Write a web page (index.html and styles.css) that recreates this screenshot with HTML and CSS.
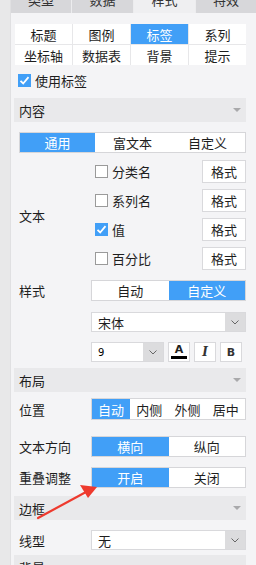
FILE: index.html
```html
<!DOCTYPE html>
<html>
  <head>
    <title>标签设置</title>
    <link rel="stylesheet" href="styles.css">
  </head>
  <body>
    <div class="app">
      <div class="side"></div>
      <div class="panel">
        <div class="tabs">
          <div class="tab">类型</div>
          <div class="tab">数据</div>
          <div class="tab on">样式</div>
          <div class="tab">特效</div>
        </div>
        <div class="body">
          <div class="subtabs">
            <div class="cell">标题</div>
            <div class="cell">图例</div>
            <div class="cell on">标签</div>
            <div class="cell">系列</div>
            <div class="cell">坐标轴</div>
            <div class="cell">数据表</div>
            <div class="cell">背景</div>
            <div class="cell">提示</div>
          </div>
          <div class="use-row">
            <span class="box on"><svg viewBox="0 0 13 13" width="13" height="13"><path d="M2.5 6.8 L5.2 9.5 L10.5 3.2" fill="none" stroke="#fff" stroke-width="1.8"/></svg></span>
            使用标签
          </div>

          <div class="section s-content">内容<span class="tri"></span></div>
          <div class="seg s-tabs">
            <div class="seg-item on">通用</div>
            <div class="seg-item">富文本</div>
            <div class="seg-item">自定义</div>
          </div>

          <div class="row text-group">
            <div class="label">文本</div>
            <div class="opts">
              <div class="opt"><span class="box"></span><span class="name">分类名</span><div class="btn">格式</div></div>
              <div class="opt"><span class="box"></span><span class="name">系列名</span><div class="btn">格式</div></div>
              <div class="opt"><span class="box on"><svg viewBox="0 0 13 13" width="13" height="13"><path d="M2.5 6.8 L5.2 9.5 L10.5 3.2" fill="none" stroke="#fff" stroke-width="1.8"/></svg></span><span class="name">值</span><div class="btn">格式</div></div>
              <div class="opt"><span class="box"></span><span class="name">百分比</span><div class="btn">格式</div></div>
            </div>
          </div>

          <div class="row r-style">
            <div class="label">样式</div>
            <div class="seg">
              <div class="seg-item">自动</div>
              <div class="seg-item on">自定义</div>
            </div>
          </div>

          <div class="row r-font">
            <div class="label"></div>
            <div class="select">宋体<span class="arrow"><svg viewBox="0 0 8 5" width="8" height="5"><path d="M0.5 0.5 L4 4 L7.5 0.5" fill="none" stroke="#666" stroke-width="1"/></svg></span></div>
          </div>

          <div class="row r-size">
            <div class="label"></div>
            <div class="tools">
              <div class="select small">9<span class="arrow"><svg viewBox="0 0 8 5" width="8" height="5"><path d="M0.5 0.5 L4 4 L7.5 0.5" fill="none" stroke="#666" stroke-width="1"/></svg></span></div>
              <div class="tool color"><span class="a">A</span><span class="bar"></span></div>
              <div class="tool italic">I</div>
              <div class="tool bold">B</div>
            </div>
          </div>

          <div class="section s-layout">布局<span class="tri"></span></div>

          <div class="row r-pos">
            <div class="label">位置</div>
            <div class="seg">
              <div class="seg-item on">自动</div>
              <div class="seg-item">内侧</div>
              <div class="seg-item">外侧</div>
              <div class="seg-item">居中</div>
            </div>
          </div>

          <div class="row r-dir">
            <div class="label">文本方向</div>
            <div class="seg">
              <div class="seg-item on">横向</div>
              <div class="seg-item">纵向</div>
            </div>
          </div>

          <div class="row r-overlap">
            <div class="label">重叠调整</div>
            <div class="seg">
              <div class="seg-item on">开启</div>
              <div class="seg-item">关闭</div>
            </div>
          </div>

          <div class="section s-border">边框<span class="tri"></span></div>

          <div class="row r-line">
            <div class="label">线型</div>
            <div class="select">无<span class="arrow"><svg viewBox="0 0 8 5" width="8" height="5"><path d="M0.5 0.5 L4 4 L7.5 0.5" fill="none" stroke="#666" stroke-width="1"/></svg></span></div>
          </div>

          <div class="section s-bg">背景<span class="tri"></span></div>
        </div>
      </div>

      <!-- red annotation arrow -->
      <svg class="pointer" width="256" height="565" viewBox="0 0 256 565">
        <path d="M38 518 L86 492" stroke="#ee3a2e" stroke-width="2.2" stroke-linecap="round"/>
        <polygon points="97,487 80,485 88,498" fill="#ee3a2e"/>
      </svg>
    </div>
  </body>
</html>
```

FILE: styles.css
```css
* {
  box-sizing: border-box;
}
html, body {
  margin: 0;
  padding: 0;
}
body {
  font-family: "Noto Sans CJK SC", "Noto Sans", sans-serif;
  font-size: 12px;
  color: #1e1e1e;
  background: #f4f4f6;
}
.app {
  position: relative;
  display: flex;
  width: 256px;
  height: 565px;
  overflow: hidden;
}
.side {
  width: 11px;
  background: #e8e8e9;
  border-right: 1px solid #e0e0e2;
}
.panel {
  flex: 1;
  background: #f4f4f6;
}

/* top tabs, cut off by the window edge */
.tabs {
  display: grid;
  grid-template-columns: 60px 61px 61px 1fr;
  gap: 1px;
  background: #ececee;
  height: 28px;
  margin-top: -15px;
}
.tab {
  background: #d7d7da;
  display: flex;
  align-items: center;
  justify-content: center;
  font-size: 13px;
  color: #333;
}
.tab.on {
  background: #efeff1;
}

.body {
  padding: 0 10px 0 8px;
}

.subtabs {
  margin: 11px 0 0 -4px;
  display: grid;
  grid-template-columns: repeat(4, 1fr);
  grid-auto-rows: 20px;
  gap: 1px;
  background: #e7e7e9;
}
.cell {
  background: #fff;
  display: flex;
  align-items: center;
  justify-content: center;
  font-size: 13px;
}
.cell.on {
  background: #419ff7;
  color: #fff;
}

.use-row {
  margin-top: 9px;
  height: 13px;
  display: flex;
  align-items: center;
  gap: 4px;
  font-size: 13px;
  padding-left: -1px;
  margin-left: -1px;
}

.box {
  width: 13px;
  height: 13px;
  border: 1px solid #9a9a9a;
  background: #fff;
  flex: none;
  display: inline-flex;
}
.box.on {
  border: none;
  background: #419ff7;
}

.section {
  margin-left: -5px;
  height: 24px;
  background: #e9e9eb;
  display: flex;
  align-items: center;
  justify-content: space-between;
  padding: 0 5px 0 5px;
  font-size: 13px;
}
.tri {
  width: 0;
  height: 0;
  border-left: 4px solid transparent;
  border-right: 4px solid transparent;
  border-top: 4px solid #a9a9ab;
}
.s-content { margin-top: 11px; }
.s-layout { margin-top: 6px; }
.s-border { margin-top: 8px; }
.s-bg { margin-top: 5px; }

.seg {
  flex: 1;
  display: flex;
  height: 21px;
  border: 1px solid #d6d6d9;
  background: #fff;
}
.seg-item {
  flex: 1;
  display: flex;
  align-items: center;
  justify-content: center;
  font-size: 13px;
}
.seg-item.on {
  background: #419ff7;
  color: #fff;
}
.s-tabs {
  margin-top: 10px;
}

.row {
  display: flex;
  align-items: center;
}
.label {
  width: 72px;
  flex: none;
  font-size: 13px;
}

.text-group {
  margin-top: 7px;
}
.opts {
  flex: 1;
  display: flex;
  flex-direction: column;
  gap: 6px;
  padding-left: 4px;
}
.opt {
  height: 23px;
  display: flex;
  align-items: center;
}
.opt .name {
  flex: 1;
  margin-left: 4px;
  font-size: 13px;
}
.btn {
  width: 44px;
  height: 23px;
  border: 1px solid #d9d9dc;
  background: #fff;
  display: flex;
  align-items: center;
  justify-content: center;
  font-size: 13px;
}

.r-style { margin-top: 10px; }
.r-font { margin-top: 11px; }
.r-size { margin-top: 10px; }
.r-pos { margin-top: 6px; }
.r-pos .seg { height: 22px; }
.r-dir { margin-top: 16px; }
.r-overlap { margin-top: 10px; }
.r-line { margin-top: 10px; }

.select {
  flex: 1;
  height: 20px;
  border: 1px solid #d9d9dc;
  background: #fff;
  display: flex;
  align-items: center;
  padding-left: 6px;
  font-size: 13px;
}
.select .arrow {
  margin-left: auto;
  width: 20px;
  align-self: stretch;
  background: #dcdcde;
  display: flex;
  align-items: center;
  justify-content: center;
}
.select.small {
  flex: none;
  width: 73px;
  font-family: "DejaVu Sans", sans-serif;
  font-size: 10px;
  color: #000;
}

.tools {
  flex: 1;
  display: flex;
  align-items: center;
}
.tool {
  width: 22px;
  height: 20px;
  border: 1px solid #d9d9dc;
  background: #fff;
  display: flex;
  align-items: center;
  justify-content: center;
  margin-left: 4px;
}
.tool.color {
  flex-direction: column;
  justify-content: flex-end;
  padding-bottom: 2px;
}
.tool.color .a {
  font-family: "DejaVu Sans", sans-serif;
  font-weight: bold;
  font-size: 11px;
  line-height: 10px;
  color: #222;
}
.tool.color .bar {
  width: 16px;
  height: 3px;
  background: #000;
  margin-top: 1px;
}
.tool.italic {
  font-family: "DejaVu Serif", serif;
  font-style: italic;
  font-weight: bold;
  font-size: 12px;
  color: #333;
}
.tool.bold {
  font-family: "DejaVu Sans", sans-serif;
  font-weight: bold;
  font-size: 11px;
  color: #333;
}

.pointer {
  position: absolute;
  left: 0;
  top: 0;
  pointer-events: none;
}
```
